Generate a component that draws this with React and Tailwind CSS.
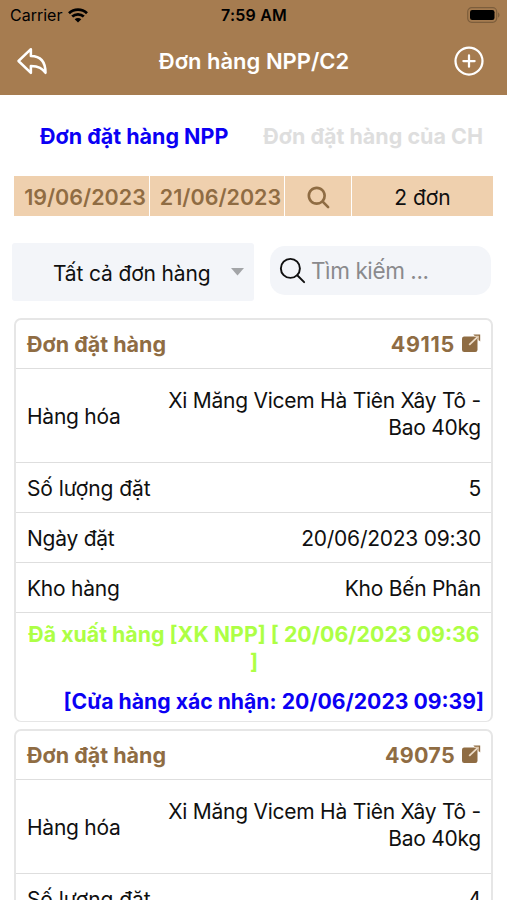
import { IoArrowUndoOutline, IoAddCircleOutline, IoSearch, IoSearchOutline } from "react-icons/io5";

function ShareIcon() {
  return (
    <svg width="20" height="20" viewBox="0 0 20 20" className="ml-[6px] shrink-0">
      <rect x="1" y="2.6" width="15.5" height="15.3" rx="2.2" fill="#8f6c43" />
      <path d="M12.3 .6H19.2V7.4Z" fill="#8f6c43" />
      <path d="M8.2 10.9L17.2 2.4" fill="none" stroke="#ecdcc8" strokeWidth="1.8" />
      <path d="M13 2.4H17.2V6.6" fill="none" stroke="#dcc6ab" strokeWidth="1.2" />
    </svg>
  );
}

function Row({ label, value, tall }) {
  return (
    <div className={`${tall ? "h-[94px]" : "h-[50px]"} flex items-center justify-between border-b border-[#dedede] pl-[11px] pr-[10px] tracking-[-0.25px]`}>
      <span className="shrink-0 pt-px">{label}</span>
      <span className={`text-right ${tall ? "pb-[3px]" : "pt-px"}`}>{value}</span>
    </div>
  );
}

function Order({ id, idClass, quantity, children }) {
  return (
    <section className="overflow-hidden rounded-[7px] border-2 border-b border-[#e6e6e6] bg-white">
      <div className="flex h-[49px] items-center justify-between border-b border-[#dedede] pl-[11px] pr-[10px] text-[21.5px] font-bold text-[#8f6c43]">
        <span>Đơn đặt hàng</span>
        <span className="flex items-center"><span className={idClass}>{id}</span><ShareIcon /></span>
      </div>
      <Row tall label="Hàng hóa" value={<>Xi Măng Vicem Hà Tiên Xây Tô -<br />Bao 40kg</>} />
      <Row label={<span className="tracking-[-0.1px]">Số lượng đặt</span>} value={quantity} />
      <Row label="Ngày đặt" value="20/06/2023 09:30" />
      <Row label="Kho hàng" value="Kho Bến Phân" />
      {children}
    </section>
  );
}

export default function App() {
  return (
    <main className="h-[900px] w-[507px] overflow-hidden bg-white font-['Inter','Liberation_Sans',sans-serif] text-[21px] leading-[27px] text-[#101010]">
      <header className="h-[95px] bg-[#a67c50] text-black">
        <div className="grid h-[30px] grid-cols-3 items-center pl-[10px] pr-[7px] text-[16px] leading-[20px]">
          <div className="flex items-center gap-[6px]">
            <span>Carrier</span>
            <svg width="20" height="15" viewBox="0 0 20 15" fill="none" stroke="black" strokeWidth="2.7">
              <path d="M1 5.2C6 .3 14 .3 19 5.2M4.2 8.6C7.5 5.5 12.5 5.5 15.8 8.6" />
              <path d="M6.7 11.2C8.6 9.5 11.4 9.5 13.3 11.2L10 14.6Z" fill="black" stroke="none" />
            </svg>
          </div>
          <span className="pr-[2px] text-center font-semibold tracking-[0.2px]">7:59 AM</span>
          <svg className="justify-self-end" width="33" height="16" viewBox="0 0 33 16">
            <rect x=".7" y=".7" width="29" height="14.6" rx="4" fill="none" stroke="#7d5e3c" strokeWidth="1.2" />
            <rect x="3" y="3" width="24.5" height="10" rx="2.2" fill="black" />
            <path d="M31 5.5C33 6 33 10 31 10.5Z" fill="#7d5e3c" />
          </svg>
        </div>
        <div className="grid h-[62px] grid-cols-[60px_1fr_60px] items-center pl-[14px] pr-[13px] text-white">
          <IoArrowUndoOutline size={36} className="[&_path]:[stroke-width:36px]" />
          <h1 className="text-center text-[22px] font-semibold">Đơn hàng NPP/C2</h1>
          <IoAddCircleOutline size={36} className="mr-[7px] justify-self-end" />
        </div>
      </header>

      <nav className="flex h-[81px] items-center justify-between pl-[40px] pr-[24px] pt-[2px] text-[21.5px] font-bold">
        <span className="text-[#0b00f4]">Đơn đặt hàng NPP</span>
        <span className="text-[#dedede]">Đơn đặt hàng của CH</span>
      </nav>

      <div className="mx-[14px] grid h-[40px] grid-cols-[135px_134px_66px_141px] gap-[1px] [&>*]:flex [&>*]:items-center [&>*]:justify-center [&>*]:bg-[#efd0ae] [&>*]:pt-[2px]">
        <div className="pl-[7px] text-[21.5px] font-semibold text-[#8f6c43]">19/06/2023</div>
        <div className="pl-[7px] text-[21.5px] font-semibold text-[#8f6c43]">21/06/2023</div>
        <div className="text-[#8f6c43]"><IoSearch size={27} /></div>
        <div>2 đơn</div>
      </div>

      <div className="mt-[27px] flex pl-[12px]">
        <div className="flex h-[58px] w-[242px] items-center justify-between rounded-[3px] bg-[#f3f5f9] pl-[41px] pr-[10px]">
          <span className="pt-[2px] tracking-[-0.15px]">Tất cả đơn hàng</span>
          <svg width="13" height="8" viewBox="0 0 13 8"><path d="M0 0H13L6.5 7.5Z" fill="#a3a5a8" /></svg>
        </div>
        <div className="ml-[16px] mt-[3px] flex h-[49px] w-[221px] items-center rounded-[15px] bg-[#f3f5f9] pl-[7px]">
          <IoSearchOutline size={31} />
          <span className="ml-[3px] text-[22.5px] tracking-[-0.4px] text-[#8a8a8d]">Tìm kiếm ...</span>
        </div>
      </div>

      <div className="mx-[14px] mt-[17px] flex flex-col gap-[7px]">
        <Order id="49115" idClass="tracking-[0.7px]" quantity="5">
          <div className="h-[108px] whitespace-nowrap pt-[8px] font-bold">
            <p className="pl-px text-center text-[21.35px] text-[#adff45]">Đã xuất hàng [XK NPP] [ 20/06/2023 09:36<br />]</p>
            <p className="mt-[13px] pr-[7px] text-right text-[21.2px] text-[#0b00f4]">[Cửa hàng xác nhận: 20/06/2023 09:39]</p>
          </div>
        </Order>
        <Order id="49075" idClass="tracking-[0.3px]" quantity="4" />
      </div>
    </main>
  );
}
